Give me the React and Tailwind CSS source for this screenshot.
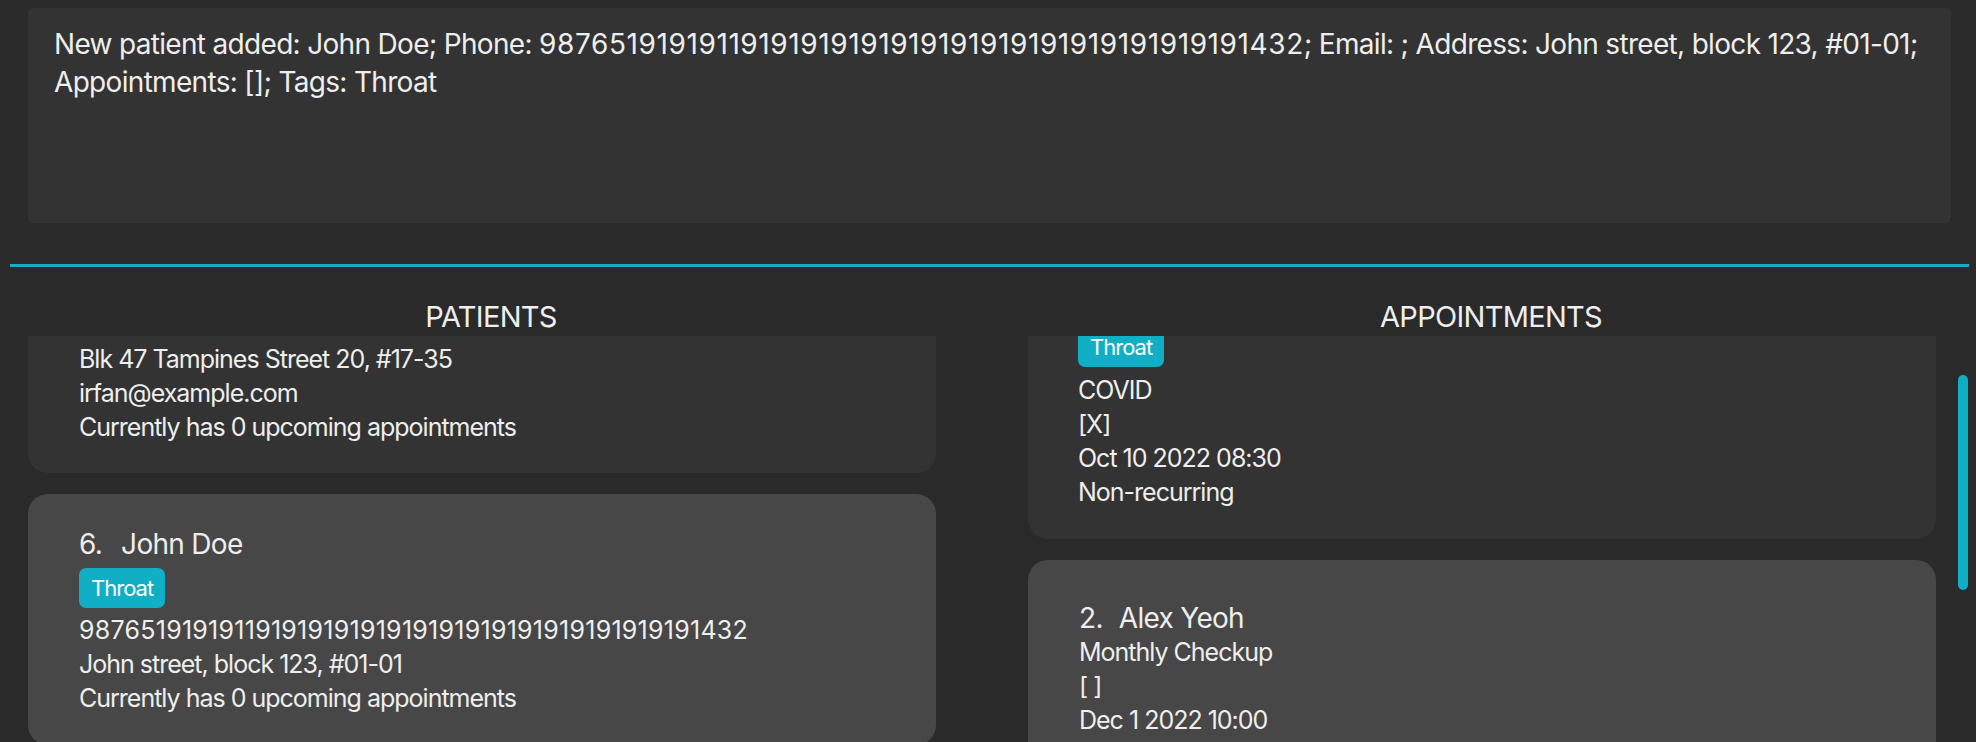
import React from 'react';

const font = { fontFamily: 'Inter, "Noto Sans", sans-serif' };

const Tag = ({ label, className = '' }) => (
  <div className={`flex h-[40px] w-fit items-center rounded-[7px] bg-[#10afc5] px-[12px] text-[22px] tracking-[-1px] text-white ${className}`}>
    {label}
  </div>
);

const Header = ({ title, className = '' }) => (
  <div className={`mt-[32px] h-[36px] text-center text-[29px] leading-[36px] tracking-[-0.7px] text-[#eeeeee] ${className}`}>
    {title}
  </div>
);

const Name = ({ index, name, gap }) => (
  <div className="flex text-[28px] leading-[34px] tracking-[-0.7px]">
    <span>{index}.</span>
    <span className={gap}>{name}</span>
  </div>
);

const Digits = ({ children, className = 'tracking-[0.26px]' }) => <span className={className}>{children}</span>;

const PatientsPanel = () => (
  <div className="flex w-[982px] shrink-0 flex-col">
    <Header title="PATIENTS" />
    <div className="mt-px flex flex-col gap-[21px] pl-[28px] pr-[46px]">
      {/* list is scrolled: only the lower part of card 5 shows */}
      <div className="rounded-b-[20px] bg-[#333333] pl-[51px] pt-[6px] pb-[29px]">
        <div>Blk 47 Tampines Street 20, #17-35</div>
        <div>irfan@example.com</div>
        <div>Currently has 0 upcoming appointments</div>
      </div>
      <div className="rounded-[20px] bg-[#474747] pl-[51px] pt-[33px] pb-[30px]">
        <Name index="6" name="John Doe" gap="ml-[19px]" />
        <Tag label="Throat" className="mt-[7px] mb-[5px]" />
        <div><Digits>98765191919119191919191919191919191919191919191432</Digits></div>
        <div>John street, block 123, #01-01</div>
        <div>Currently has 0 upcoming appointments</div>
      </div>
    </div>
  </div>
);

const AppointmentsPanel = () => (
  <div className="flex w-[994px] shrink-0 flex-col pl-[18px]">
    <Header title="APPOINTMENTS" className="ml-[6px]" />
    <div className="mt-px flex">
      <div className="flex w-[936px] shrink-0 flex-col gap-[21px] pl-[28px]">
        <div className="overflow-hidden rounded-b-[20px] bg-[#333333] pl-[50px] pb-[30px]">
          <Tag label="Throat" className="-mt-[9px] mb-[6px]" />
          <div>COVID</div>
          <div>[X]</div>
          <div>Oct 10 2022 08:30</div>
          <div>Non-recurring</div>
        </div>
        <div className="rounded-[20px] bg-[#474747] pl-[51px] pt-[41px] pb-[30px]">
          <Name index="2" name="Alex Yeoh" gap="ml-[16px]" />
          <div>Monthly Checkup</div>
          <div className="whitespace-pre">[ ]</div>
          <div>Dec 1 2022 10:00</div>
          <div>Recurring</div>
        </div>
      </div>
      <div className="ml-[22px] mt-[39px] h-[215px] w-[10px] shrink-0 rounded-full bg-[#10afc5]" />
    </div>
  </div>
);

export default function App() {
  return (
    <div className="h-[742px] w-[1976px] overflow-hidden bg-[#2a2a2a] text-[25px] leading-[34px] tracking-[-1px] text-[#eeeeee]" style={font}>
      <div className="ml-[28px] mr-[25px] mt-[8px] h-[215px] rounded-[5px] bg-[#333333] px-[26px] pt-[17px] text-[28px] leading-[38px] tracking-[-0.68px]">
        New patient added: John Doe; Phone: <Digits className="tracking-[0.6px]">98765191919119191919191919191919191919191919191432</Digits>; Email: ; Address: John street, block 123, #01-01; Appointments: []; Tags: Throat
      </div>
      <div className="ml-[10px] mt-[41px] h-[3px] w-[1959px] bg-[#10afc5]" />
      <div className="flex">
        <PatientsPanel />
        <AppointmentsPanel />
      </div>
    </div>
  );
}
